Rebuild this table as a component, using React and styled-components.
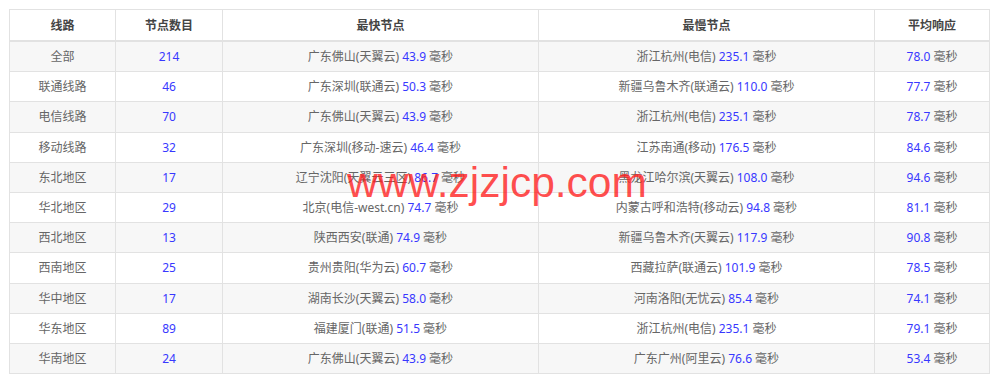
import React from "react";
import styled, { createGlobalStyle } from "styled-components";

const GlobalStyle = createGlobalStyle`
  html, body {
    margin: 0;
    padding: 0;
    background: #fff;
  }
  body {
    font-family: "Noto Sans", "Noto Sans CJK SC", sans-serif;
  }
`;

const Page = styled.div`
  position: relative;
  padding: 9px 11px 0 9px;
`;

const Table = styled.table`
  width: 980px;
  border-collapse: collapse;
  table-layout: fixed;
  font-size: 12px;
  color: #666;
`;

const Th = styled.th`
  height: 30px;
  padding: 0 6px;
  border: 1px solid #e2e2e2;
  border-bottom: 2px solid #e2e2e2;
  font-weight: bold;
  color: #444;
  text-align: center;
  background: #fff;
`;

const Row = styled.tr`
  background: ${(p) => (p.$odd ? "#f7f7f7" : "#fff")};
`;

const Td = styled.td`
  height: 29.2px;
  padding: 0 6px;
  border: 1px solid #e2e2e2;
  text-align: center;
  line-height: 17px;
  white-space: nowrap;
`;

const Num = styled.span`
  color: #3838ff;
`;

const Watermark = styled.div`
  position: absolute;
  left: 347px;
  top: 162px;
  font-family: "Liberation Sans", Arial, sans-serif;
  font-size: 42.5px;
  line-height: 1;
  color: rgba(255, 30, 30, 0.8);
  pointer-events: none;
  white-space: nowrap;
`;

const rows = [
  ["全部", "214", "广东佛山(天翼云)", "43.9", "浙江杭州(电信)", "235.1", "78.0"],
  ["联通线路", "46", "广东深圳(联通云)", "50.3", "新疆乌鲁木齐(联通云)", "110.0", "77.7"],
  ["电信线路", "70", "广东佛山(天翼云)", "43.9", "浙江杭州(电信)", "235.1", "78.7"],
  ["移动线路", "32", "广东深圳(移动-速云)", "46.4", "江苏南通(移动)", "176.5", "84.6"],
  ["东北地区", "17", "辽宁沈阳(天翼云三区)", "86.7", "黑龙江哈尔滨(天翼云)", "108.0", "94.6"],
  ["华北地区", "29", "北京(电信-west.cn)", "74.7", "内蒙古呼和浩特(移动云)", "94.8", "81.1"],
  ["西北地区", "13", "陕西西安(联通)", "74.9", "新疆乌鲁木齐(天翼云)", "117.9", "90.8"],
  ["西南地区", "25", "贵州贵阳(华为云)", "60.7", "西藏拉萨(联通云)", "101.9", "78.5"],
  ["华中地区", "17", "湖南长沙(天翼云)", "58.0", "河南洛阳(无忧云)", "85.4", "74.1"],
  ["华东地区", "89", "福建厦门(联通)", "51.5", "浙江杭州(电信)", "235.1", "79.1"],
  ["华南地区", "24", "广东佛山(天翼云)", "43.9", "广东广州(阿里云)", "76.6", "53.4"],
];

function Latency({ place, ms }) {
  return (
    <>
      {place ? `${place} ` : ""}
      <Num>{ms}</Num> 毫秒
    </>
  );
}

export default function App() {
  return (
    <Page>
      <GlobalStyle />
      <Table>
        <colgroup>
          <col style={{ width: 106 }} />
          <col style={{ width: 107 }} />
          <col style={{ width: 316 }} />
          <col style={{ width: 336 }} />
          <col style={{ width: 115 }} />
        </colgroup>
        <thead>
          <tr>
            <Th>线路</Th>
            <Th>节点数目</Th>
            <Th>最快节点</Th>
            <Th>最慢节点</Th>
            <Th>平均响应</Th>
          </tr>
        </thead>
        <tbody>
          {rows.map((r, i) => (
            <Row key={r[0]} $odd={i % 2 === 0}>
              <Td>{r[0]}</Td>
              <Td>
                <Num>{r[1]}</Num>
              </Td>
              <Td>
                <Latency place={r[2]} ms={r[3]} />
              </Td>
              <Td>
                <Latency place={r[4]} ms={r[5]} />
              </Td>
              <Td>
                <Latency ms={r[6]} />
              </Td>
            </Row>
          ))}
        </tbody>
      </Table>
      <Watermark>www.zjzjcp.com</Watermark>
    </Page>
  );
}
